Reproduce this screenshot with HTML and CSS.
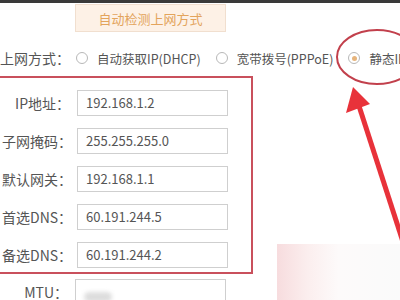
FILE: index.html
```html
<!DOCTYPE html>
<html lang="zh-CN">
<head>
  <meta charset="UTF-8">
  <title>上网设置</title>
  <link rel="stylesheet" href="styles.css">
</head>
<body>

<div class="topbar"></div>

<div class="detect-wrap">
  <button class="detect">自动检测上网方式</button>
</div>

<div class="mode-row">
  <span class="label">上网方式：</span>
  <label class="radio"><span class="dot"></span>自动获取IP(DHCP)</label>
  <label class="radio"><span class="dot"></span>宽带拨号(PPPoE)</label>
  <label class="radio checked"><span class="dot"></span>静态IP</label>
</div>

<div class="static-box">
  <div class="row">
    <span class="label">IP地址：</span>
    <div class="field">192.168.1.2</div>
  </div>
  <div class="row">
    <span class="label">子网掩码：</span>
    <div class="field">255.255.255.0</div>
  </div>
  <div class="row">
    <span class="label">默认网关：</span>
    <div class="field">192.168.1.1</div>
  </div>
  <div class="row">
    <span class="label">首选DNS：</span>
    <div class="field">60.191.244.5</div>
  </div>
  <div class="row">
    <span class="label">备选DNS：</span>
    <div class="field">60.191.244.2</div>
  </div>
</div>

<div class="row mtu-row">
  <span class="label">MTU：</span>
  <div class="field"><span class="blur"></span></div>
</div>

<!-- annotations drawn over the screenshot -->
<svg class="marks" width="400" height="300" viewBox="0 0 400 300">
  <ellipse cx="377" cy="57" rx="40" ry="27" fill="none" stroke="#c2404c" stroke-width="2"/>
  <line x1="405" y1="248" x2="359" y2="106" stroke="#e8323a" stroke-width="5"/>
  <polygon points="353,87 346,113 370,104" fill="#e8323a"/>
</svg>

<div class="watermark"></div>

</body>
</html>
```

FILE: styles.css
```css
body {
  margin: 0;
  width: 400px;
  height: 300px;
  overflow: hidden;
  background: #fff;
  font-family: "Noto Sans CJK SC", "Noto Sans", sans-serif;
  font-size: 14px;
  color: #555;
  position: relative;
}
.topbar {
  height: 3px;
  background: #3a3a3a;
}
.detect-wrap {
  padding: 1px 0 0 75px;
}
.detect {
  width: 151px;
  height: 28px;
  background: #fdf1e6;
  border: 1px solid #f1dfcf;
  color: #e3a45c;
  font-family: inherit;
  font-size: 13px;
  padding: 0;
}
.mode-row {
  display: flex;
  align-items: center;
  height: 36px;
  margin-top: 8px;
  white-space: nowrap;
  overflow: hidden;
}
.mode-row .label {
  width: 70px;
  margin-right: 6px;
  flex-shrink: 0;
}
.radio {
  display: flex;
  align-items: center;
  margin-right: 15px;
  font-size: 12.5px;
  flex-shrink: 0;
}
.dot {
  width: 12px;
  height: 12px;
  border: 1px solid #b8b8b8;
  border-radius: 50%;
  margin-right: 9px;
  box-sizing: border-box;
  position: relative;
  flex-shrink: 0;
}
.checked .dot::after {
  content: "";
  position: absolute;
  left: 2.5px;
  top: 2.5px;
  width: 5px;
  height: 5px;
  border-radius: 50%;
  background: #e6b47c;
}
.static-box {
  margin: 0 0 0 -10px;
  width: 263px;
  border: 2px solid #c9505c;
  padding: 12px 0 4px 10px;
  box-sizing: border-box;
  display: flex;
  flex-direction: column;
  gap: 12px;
}
.row {
  display: flex;
  align-items: center;
  white-space: nowrap;
}
.row .label {
  width: 68px;
  text-align: right;
  margin-right: 7px;
  flex-shrink: 0;
}
.field {
  width: 151px;
  height: 26px;
  border: 1px solid #cfcfcf;
  box-sizing: border-box;
  padding-left: 8px;
  line-height: 24px;
  font-size: 13px;
  color: #555;
  flex-shrink: 0;
}
.mtu-row {
  margin-top: 5px;
}
.blur {
  display: inline-block;
  width: 28px;
  height: 10px;
  margin-top: 12px;
  background: #ddd;
  border-radius: 5px;
  filter: blur(2px);
  vertical-align: top;
}
.marks {
  position: absolute;
  left: 0;
  top: 0;
}
.watermark {
  position: absolute;
  left: 277px;
  top: 244px;
  width: 123px;
  height: 56px;
  background: linear-gradient(90deg, #f7dcde 0%, #fbeeee 25%, #fdfafa 50%, #fafafa 100%);
}
```
